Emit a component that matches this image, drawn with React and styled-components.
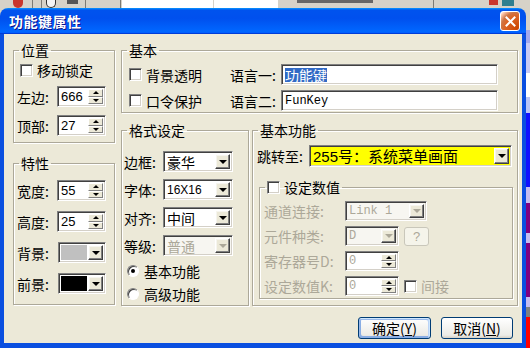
import React from 'react'
import styled, { createGlobalStyle } from 'styled-components'

const CJK = `"Noto Sans CJK SC", "Liberation Sans", sans-serif`
const SANS = `"Liberation Sans", "Noto Sans CJK SC", sans-serif`
const MONO = `"Liberation Mono", "Noto Sans CJK SC", monospace`
const OFF = '#aca899'

const GlobalStyle = createGlobalStyle`
  html, body { margin: 0; padding: 0; }
  body {
    width: 530px;
    height: 348px;
    overflow: hidden;
    background: #d6d2c8;
    font-family: ${CJK};
  }
`

const Screen = styled.div`
  width: 530px;
  height: 348px;
  display: grid;
  grid-template-columns: 526px 4px;
  grid-template-rows: 8px 340px;
`

const Toolbar = styled.div`
  grid-column: 1 / -1;
  display: flex;
  align-items: flex-start;
  background: #d6d2c8;
  overflow: hidden;
`

const ToolBit = styled.span`
  flex-shrink: 0;
  margin-left: ${p => p.$ml}px;
  width: ${p => p.$w}px;
  height: ${p => p.$h || 8}px;
  background: ${p => p.$c};
  border-radius: ${p => p.$r || 0};
  box-sizing: border-box;
  border: ${p => (p.$b ? `1px solid ${p.$b}` : 'none')};
  border-top: none;
`

const SideStrip = styled.div`
  display: flex;
  flex-direction: column;
`

const Band = styled.div`
  height: ${p => p.$h}px;
  background: ${p => p.$c};
  flex-shrink: 0;
`

const Window = styled.div`
  display: flex;
  flex-direction: column;
`

const TitleBar = styled.div`
  height: 26px;
  flex-shrink: 0;
  display: flex;
  align-items: center;
  justify-content: space-between;
  padding: 0 6px 0 9px;
  border-radius: 8px 8px 0 0;
  background: linear-gradient(180deg, #0997ff, #0053ee 8%, #0050ee 40%, #06f 88%, #06f 93%, #005bff 95%, #003dd7 96%, #003dd7);
`

const Title = styled.span`
  color: #fff;
  font-size: 14px;
  font-weight: bold;
  letter-spacing: 0.5px;
  text-shadow: 1px 1px #0f1089;
`

const CloseButton = styled.div`
  width: 20px;
  height: 20px;
  box-sizing: border-box;
  border: 1px solid #fff;
  border-radius: 3px;
  display: flex;
  align-items: center;
  justify-content: center;
  background: radial-gradient(circle at 90% 90%, #cc4600 0%, #dc6527 55%, #cd7546 70%, #ffccb2 90%, #fff 100%);
`

const Frame = styled.div`
  flex: 1;
  display: flex;
  flex-direction: column;
  gap: 11px;
  box-sizing: border-box;
  background: #ece9d8;
  border-style: solid;
  border-color: #0a4fe0;
  border-width: 0 4px 5px 4px;
  padding: 9px 6px 4px 9px;
`

const Main = styled.div`
  display: flex;
  gap: 6px;
  height: 263px;
`

const LeftCol = styled.div`
  width: 102px;
  flex-shrink: 0;
  display: flex;
  flex-direction: column;
  gap: 13px;
`

const RightCol = styled.div`
  flex: 1;
  display: flex;
  flex-direction: column;
  gap: 10px;
`

const GroupRow = styled.div`
  display: flex;
  gap: 3px;
`

const Group = styled.fieldset`
  margin: ${p => p.$m || 0};
  min-width: 0;
  box-sizing: border-box;
  height: ${p => p.$h}px;
  width: ${p => (p.$w ? `${p.$w}px` : 'auto')};
  padding: ${p => p.$pt}px ${p => p.$pr || 0}px 0 ${p => p.$pl}px;
  border: 1px solid #aca899;
  box-shadow: inset 1px 1px 0 #fff, 1px 1px 0 #fff;
  display: flex;
  flex-direction: column;
  gap: ${p => p.$gap || 0}px;
  & > legend {
    margin-left: ${p => 5 - p.$pl}px;
  }
`

const Legend = styled.legend`
  padding: 0 2px;
  height: 14px;
  font-size: 14px;
  line-height: 14px;
  color: #000;
  display: flex;
  align-items: center;
  gap: 4px;
`

const Row = styled.div`
  display: flex;
  align-items: center;
  flex-shrink: 0;
  height: ${p => p.$h || 21}px;
  gap: ${p => p.$gap || 0}px;
`

const Label = styled.span`
  width: ${p => (p.$w ? `${p.$w}px` : 'auto')};
  flex-shrink: 0;
  font-size: 14px;
  line-height: 16px;
  white-space: nowrap;
  color: ${p => (p.$off ? OFF : '#000')};
`

const CheckItem = styled.div`
  display: flex;
  align-items: center;
  gap: ${p => p.$gap || 4}px;
  height: ${p => p.$h || 21}px;
  margin-left: ${p => p.$ml || 0}px;
  flex-shrink: 0;
  font-size: 14px;
  color: ${p => (p.$off ? OFF : '#000')};
`

const Check = styled.span`
  width: 13px;
  height: 13px;
  flex-shrink: 0;
  box-sizing: border-box;
  background: #fff;
  border: 1px solid;
  border-color: #808080 #fff #fff #808080;
  box-shadow: inset 1px 1px 0 #404040, inset -1px -1px 0 #d4d0c8;
`

const Radio = styled.span`
  width: 12px;
  height: 12px;
  flex-shrink: 0;
  box-sizing: border-box;
  border-radius: 50%;
  background: #fff;
  border: 1px solid;
  border-color: #808080 #fff #fff #808080;
  box-shadow: inset 1px 1px 0 #404040;
  display: flex;
  align-items: center;
  justify-content: center;
`

const Dot = styled.span`
  width: 4px;
  height: 4px;
  border-radius: 50%;
  background: #000;
`

const Sunken = styled.div`
  box-sizing: border-box;
  width: ${p => p.$w}px;
  height: ${p => p.$h || 21}px;
  flex-shrink: 0;
  display: flex;
  align-items: stretch;
  padding: 2px;
  background: ${p => p.$bg || '#fff'};
  border: 1px solid;
  border-color: #808080 #fff #fff #808080;
  box-shadow: inset 1px 1px 0 #404040, inset -1px -1px 0 #d4d0c8;
`

const fonts = {
  sans: `font-family: ${SANS}; font-size: 13px;`,
  small: `font-family: ${SANS}; font-size: 12px;`,
  mono: `font-family: ${MONO}; font-size: 12px;`,
  cjk: `font-family: ${CJK}; font-size: 14px;`,
  big: `font-family: ${SANS}; font-size: 15px;`,
}

const Value = styled.span`
  flex: 1;
  min-width: 0;
  display: flex;
  align-items: center;
  padding-left: ${p => p.$pl ?? 1}px;
  white-space: nowrap;
  line-height: 1;
  color: ${p => (p.$off ? OFF : '#000')};
  ${p => fonts[p.$font || 'cjk']}
`

const Selected = styled.span`
  background: #316ac5;
  color: #fff;
`

const Swatch = styled.span`
  flex: 1;
  margin-right: 1px;
  background: ${p => p.$c};
`

const DropButton = styled.span`
  width: 15px;
  flex-shrink: 0;
  box-sizing: border-box;
  display: flex;
  align-items: center;
  justify-content: center;
  background: #ece9d8;
  border: 1px solid;
  border-color: #fff #404040 #404040 #fff;
  box-shadow: inset -1px -1px 0 #808080, inset 1px 1px 0 #f6f5ef;
`

const Spin = styled.span`
  width: 15px;
  flex-shrink: 0;
  display: flex;
  flex-direction: column;
`

const SpinPart = styled.span`
  flex: 1;
  box-sizing: border-box;
  display: flex;
  align-items: center;
  justify-content: center;
  background: #ece9d8;
  border: 1px solid;
  border-color: #fff #808080 #808080 #fff;
`

const Arrow = styled.span`
  width: 0;
  height: 0;
  border-left: ${p => p.$s}px solid transparent;
  border-right: ${p => p.$s}px solid transparent;
  ${p =>
    p.$up
      ? `border-bottom: ${p.$s}px solid ${p.$c || '#000'};`
      : `border-top: ${p.$s}px solid ${p.$c || '#000'};`}
`

const BasicGrid = styled.div`
  display: grid;
  grid-template-columns: 101px 51px 217px;
  grid-auto-rows: 21px;
  row-gap: 5px;
  align-items: center;
`

const SmallButton = styled.span`
  width: 25px;
  height: 19px;
  box-sizing: border-box;
  flex-shrink: 0;
  margin-left: 5px;
  display: flex;
  align-items: center;
  justify-content: center;
  border: 1px solid #c9c7ba;
  border-radius: 3px;
  background: #f5f4ea;
  color: ${OFF};
  font: 13px ${SANS};
`

const ButtonRow = styled.div`
  display: flex;
  justify-content: flex-end;
  gap: 10px;
  padding-right: 3px;
`

const PushButton = styled.button`
  box-sizing: border-box;
  width: ${p => p.$w}px;
  height: 22px;
  padding: 0;
  color: #000;
  font: 14px ${CJK};
  border: 1px solid #003c74;
  border-radius: 3px;
  background: linear-gradient(180deg, #fff, #ecebe6 86%, #d6d0c5);
  box-shadow: ${p =>
    p.$default
      ? 'inset -1px 1px #cee7ff, inset 1px 2px #98b8ea, inset -2px 2px #bcd4f6, inset 1px -1px #89ade4, inset 2px -2px #89ade4'
      : 'none'};
`

function SpinBox({ w = 49, h = 21, value, font = 'sans', off }) {
  return (
    <Sunken $w={w} $h={h}>
      <Value $font={font} $off={off}>{value}</Value>
      <Spin>
        <SpinPart><Arrow $up $s={3} /></SpinPart>
        <SpinPart><Arrow $s={3} /></SpinPart>
      </Spin>
    </Sunken>
  )
}

function Combo({ w, h = 21, bg, font, off, children }) {
  return (
    <Sunken $w={w} $h={h} $bg={off ? '#f7f6f1' : bg}>
      <Value $font={font} $off={off}>{children}</Value>
      <DropButton><Arrow $s={4} $c={off ? OFF : '#000'} /></DropButton>
    </Sunken>
  )
}

function ColorCombo({ color }) {
  return (
    <Sunken $w={48}>
      <Swatch $c={color} />
      <DropButton><Arrow $s={4} /></DropButton>
    </Sunken>
  )
}

const toolBits = [
  { ml: 13, w: 10, c: '#c8372d', r: '0 0 5px 5px' },
  { ml: 9, w: 1, c: '#7d7b74' },
  { ml: 8, w: 1, c: '#7d7b74' },
  { ml: 4, w: 10, c: '#f4f4f4', b: '#333', r: '0 0 5px 5px' },
  { ml: 11, w: 11, c: '#555', h: 4 },
  { ml: 7, w: 1, c: '#7d7b74' },
  { ml: 34, w: 1, c: '#7d7b74' },
  { ml: 1, w: 91, c: '#fff' },
  { ml: 1, w: 64, c: '#fff' },
  { ml: 19, w: 76, c: '#666', h: 3 },
  { ml: 60, w: 1, c: '#7d7b74' },
  { ml: 55, w: 9, c: '#c8372d', h: 5 },
  { ml: 4, w: 12, c: '#2f7f8f', h: 6 },
]

const sideBands = [
  ['#d6d2c8', 22], ['#a2a8ee', 13], ['#c8caf4', 30], ['#ffffff', 24], ['#b9c4f7', 16],
  ['#1010ff', 74], ['#c4bcf0', 16], ['#800080', 30], ['#c4bcf0', 10], ['#800080', 54],
  ['#c4bcf0', 10], ['#808080', 10], ['#ff0000', 31],
]

export default function App() {
  return (
    <>
      <GlobalStyle />
      <Screen>
        <Toolbar>
          {toolBits.map((t, i) => (
            <ToolBit key={i} $ml={t.ml} $w={t.w} $h={t.h} $c={t.c} $r={t.r} $b={t.b} />
          ))}
        </Toolbar>
        <Window>
          <TitleBar>
            <Title>功能键属性</Title>
            <CloseButton>
              <svg width="11" height="11" viewBox="0 0 11 11">
                <path d="M1.5 1.5 L9.5 9.5 M9.5 1.5 L1.5 9.5" stroke="#fff" strokeWidth="2" strokeLinecap="square" />
              </svg>
            </CloseButton>
          </TitleBar>
          <Frame>
            <Main>
              <LeftCol>
                <Group $h={100} $pt={5} $pl={3} $gap={8}>
                  <Legend>位置</Legend>
                  <CheckItem $ml={3} $h={16}><Check />移动锁定</CheckItem>
                  <Row><Label $w={40}>左边:</Label><SpinBox value="666" /></Row>
                  <Row><Label $w={40}>顶部:</Label><SpinBox value="27" /></Row>
                </Group>
                <Group $h={149} $pt={10} $pl={3} $gap={10}>
                  <Legend>特性</Legend>
                  <Row><Label $w={40}>宽度:</Label><SpinBox value="55" /></Row>
                  <Row><Label $w={40}>高度:</Label><SpinBox value="25" /></Row>
                  <Row><Label $w={41}>背景:</Label><ColorCombo color="#c0c0c0" /></Row>
                  <Row><Label $w={41}>前景:</Label><ColorCombo color="#000" /></Row>
                </Group>
              </LeftCol>
              <RightCol>
                <Group $h={70} $pt={7} $pl={7}>
                  <Legend>基本</Legend>
                  <BasicGrid>
                    <CheckItem><Check />背景透明</CheckItem>
                    <Label>语言一:</Label>
                    <Sunken $w={217}>
                      <Value $font="cjk"><Selected>功能键</Selected></Value>
                    </Sunken>
                    <CheckItem><Check />口令保护</CheckItem>
                    <Label>语言二:</Label>
                    <Sunken $w={217}>
                      <Value $font="mono">FunKey</Value>
                    </Sunken>
                  </BasicGrid>
                </Group>
                <GroupRow>
                  <Group $w={128} $h={183} $pt={14} $pl={2} $gap={7}>
                    <Legend>格式设定</Legend>
                    <Row><Label $w={39}>边框:</Label><Combo w={70}>豪华</Combo></Row>
                    <Row><Label $w={39}>字体:</Label><Combo w={70} font="small">16X16</Combo></Row>
                    <Row><Label $w={39}>对齐:</Label><Combo w={70}>中间</Combo></Row>
                    <Row><Label $w={39}>等级:</Label><Combo w={70} off>普通</Combo></Row>
                    <CheckItem $ml={3} $gap={5} $h={16}><Radio><Dot /></Radio>基本功能</CheckItem>
                    <CheckItem $ml={3} $gap={5} $h={16}><Radio />高级功能</CheckItem>
                  </Group>
                  <Group $w={266} $h={183} $pt={8} $pl={4} $pr={4} $gap={13}>
                    <Legend>基本功能</Legend>
                    <Row $h={22}>
                      <Label $w={52}>跳转至:</Label>
                      <Combo w={203} h={22} bg="#ffff00" font="big">255号：系统菜单画面</Combo>
                    </Row>
                    <Group $h={119} $pt={7} $pl={4} $gap={5} $m="0 0 0 2px">
                      <Legend><Check />设定数值</Legend>
                      <Row $h={20}>
                        <Label $w={81} $off>通道连接:</Label>
                        <Combo w={82} h={20} font="mono" off>Link 1</Combo>
                      </Row>
                      <Row $h={20}>
                        <Label $w={81} $off>元件种类:</Label>
                        <Combo w={54} h={20} font="mono" off>D</Combo>
                        <SmallButton>?</SmallButton>
                      </Row>
                      <Row $h={20}>
                        <Label $w={81} $off>寄存器号D:</Label>
                        <SpinBox w={54} h={20} value="0" font="mono" off />
                      </Row>
                      <Row $h={20}>
                        <Label $w={81} $off>设定数值K:</Label>
                        <SpinBox w={54} h={20} value="0" font="mono" off />
                        <CheckItem $ml={5} $h={20} $off><Check />间接</CheckItem>
                      </Row>
                    </Group>
                  </Group>
                </GroupRow>
              </RightCol>
            </Main>
            <ButtonRow>
              <PushButton $w={73} $default>确定(<u>Y</u>)</PushButton>
              <PushButton $w={72}>取消(<u>N</u>)</PushButton>
            </ButtonRow>
          </Frame>
        </Window>
        <SideStrip>
          {sideBands.map(([c, h], i) => <Band key={i} $c={c} $h={h} />)}
        </SideStrip>
      </Screen>
    </>
  )
}
